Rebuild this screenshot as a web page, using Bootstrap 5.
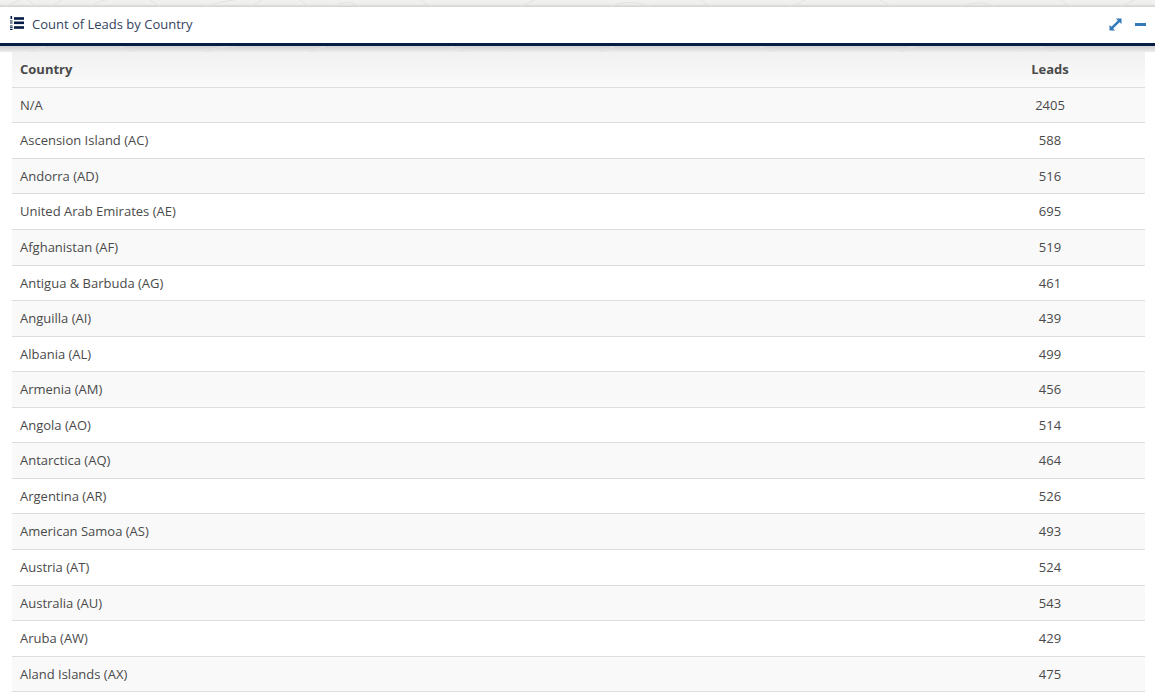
<!DOCTYPE html>
<html lang="en"><head><meta charset="utf-8">
<link href="https://cdn.jsdelivr.net/npm/bootstrap@5.3.0/dist/css/bootstrap.min.css" rel="stylesheet">
<style>
html,body{height:695px;overflow:hidden;background:#fff;font-family:"Open Sans",sans-serif}
.strip-top{height:7px;background:linear-gradient(#f1f1f0 0,#efefee 4px,#cfcfcf 7px);overflow:hidden}
.strip-bot{height:6px;background:linear-gradient(#d0d0d0,#ececec);overflow:hidden}
.strip-top svg,.strip-bot svg{display:block}
.strip-top path,.strip-bot path{fill:none;stroke:#e2e2e2;stroke-width:1}
.panel-head{height:39px;background:#fff;border-bottom:3px solid #051c45;padding:0 9px 0 10px;color:#34435e;font-size:13px}
.panel-head svg{display:block}
.ico-list{margin-bottom:3px}
.ico-expand{margin-bottom:2px;margin-right:1.5px}
.ico-min{margin-bottom:1px}
.table-wrap{padding:0 10px 0 12px;background:#fff}
.leads{margin:0;font-size:13px;color:#4a4a4a;width:100%}
.leads th,.leads td{padding:0 8px;height:35.57px;border-bottom:1px solid #ddd;vertical-align:middle;font-weight:400;color:#4a4a4a;background:transparent;box-shadow:none}
.leads td{padding-top:1px}
.leads thead th{font-weight:700;height:35.2px;background:linear-gradient(#f1f1f1,#fafafa)}
.leads tbody tr:nth-child(odd){background:#f9f9f9}
.leads .num{width:190px;text-align:center}
</style></head><body>
<div class="strip-top"><svg width="1155" height="7" viewBox="0 0 1155 7"><path d="M5 7 20 0M28 0 36 7M50 7 62 0M90 7C95 3 100 1 106 0M150 0 160 7M205 7C215 3 225 1 235 0M250 7 262 0M300 0 310 7M335 7C340 2 350 0 360 7M420 0 432 7M520 7 535 0M610 7C620 1 640 1 650 7M700 0 712 7M790 7 805 0M880 0 892 7M960 7C970 2 985 1 995 7M1060 0 1072 7M1120 7 1135 0"/></svg></div>
<div class="panel-head d-flex align-items-center">
<svg class="me-2 ico-list" width="14" height="15" viewBox="0 0 14 15" fill="#051c45"><rect x="4" y="1.2" width="10" height="2.6"/><rect x="4" y="5.5" width="10" height="2.6"/><rect x="4" y="10.2" width="10" height="2.6"/><rect x="0.5" y="0" width="1.6" height="3"/><rect x="0" y="4.5" width="2.6" height="1"/><rect x="0" y="6.5" width="2.6" height="1"/><rect x="0" y="9.5" width="2.6" height="1"/><rect x="0" y="11.2" width="2.6" height="1"/><rect x="0" y="13" width="2.6" height="1"/></svg>
<span>Count of Leads by Country</span>
<div class="ms-auto d-flex align-items-center gap-2">
<svg class="ico-expand" width="13" height="13" viewBox="0 0 13 13" fill="#337ab7"><path d="M7 0.5H12.5V6L10.6 4.2 4.2 10.6 6 12.5H0.5V7L2.4 8.8 8.8 2.4Z"/></svg>
<svg class="ms-1 ico-min" width="11" height="3" viewBox="0 0 11 3" fill="#337ab7"><rect width="11" height="3"/></svg>
</div>
</div>
<div class="strip-bot"><svg width="1155" height="6" viewBox="0 0 1155 6"><path d="M30 6 45 0M120 0 135 6M205 6C215 2 225 0 235 0M310 6 325 0M450 0 465 6M600 6 615 0M760 0 775 6M900 6 915 0M1040 0 1055 6"/></svg></div>
<div class="table-wrap">
<table class="table leads"><thead><tr><th>Country</th><th class="num">Leads</th></tr></thead><tbody>
<tr><td>N/A</td><td class="num">2405</td></tr>
<tr><td>Ascension Island (AC)</td><td class="num">588</td></tr>
<tr><td>Andorra (AD)</td><td class="num">516</td></tr>
<tr><td>United Arab Emirates (AE)</td><td class="num">695</td></tr>
<tr><td>Afghanistan (AF)</td><td class="num">519</td></tr>
<tr><td>Antigua &amp; Barbuda (AG)</td><td class="num">461</td></tr>
<tr><td>Anguilla (AI)</td><td class="num">439</td></tr>
<tr><td>Albania (AL)</td><td class="num">499</td></tr>
<tr><td>Armenia (AM)</td><td class="num">456</td></tr>
<tr><td>Angola (AO)</td><td class="num">514</td></tr>
<tr><td>Antarctica (AQ)</td><td class="num">464</td></tr>
<tr><td>Argentina (AR)</td><td class="num">526</td></tr>
<tr><td>American Samoa (AS)</td><td class="num">493</td></tr>
<tr><td>Austria (AT)</td><td class="num">524</td></tr>
<tr><td>Australia (AU)</td><td class="num">543</td></tr>
<tr><td>Aruba (AW)</td><td class="num">429</td></tr>
<tr><td>Aland Islands (AX)</td><td class="num">475</td></tr>
</tbody></table>
</div>
<script src="https://cdn.jsdelivr.net/npm/bootstrap@5.3.0/dist/js/bootstrap.bundle.min.js"></script>
</body></html>
